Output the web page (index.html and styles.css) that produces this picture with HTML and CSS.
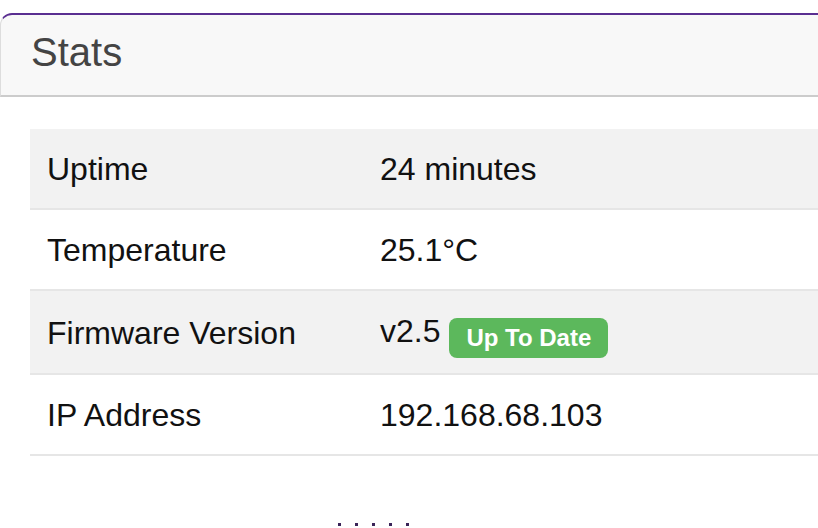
FILE: index.html
```html
<!DOCTYPE html>
<html>
<head>
    <meta charset="UTF-8">
    <title>Stats</title>
    <link rel="stylesheet" href="styles.css">
</head>
<body>
    <div class="panel">
        <div class="panel-heading">Stats</div>
        <div class="panel-body">
            <table class="stats-table">
                <tbody>
                    <tr>
                        <td class="stat-name">Uptime</td>
                        <td>24 minutes</td>
                    </tr>
                    <tr>
                        <td class="stat-name">Temperature</td>
                        <td>25.1°C</td>
                    </tr>
                    <tr>
                        <td class="stat-name">Firmware Version</td>
                        <td>v2.5 <span class="label-success">Up To Date</span></td>
                    </tr>
                    <tr>
                        <td class="stat-name">IP Address</td>
                        <td>192.168.68.103</td>
                    </tr>
                </tbody>
            </table>
        </div>
    </div>

    <div class="dots">
        <span></span><span></span><span></span><span></span><span></span>
    </div>
</body>
</html>
```

FILE: styles.css
```css
* {
    margin: 0;
    padding: 0;
    box-sizing: border-box;
}

body {
    font-family: "Liberation Sans", Arial, sans-serif;
    background: #fff;
    overflow: hidden;
    width: 1100px;
}

.panel {
    margin-top: 13px;
    width: 1000px;
    background: #fff;
}

.panel-heading {
    background: #f8f8f8;
    border-top: 2px solid #5a2e91;
    border-left: 1px solid #ddd;
    border-bottom: 2px solid #ccc;
    border-radius: 12px 12px 0 0;
    color: #444;
    font-size: 40px;
    line-height: 48px;
    padding: 13px 30px 19px;
}

.panel-body {
    padding: 32px 0 30px 30px;
}

.stats-table {
    width: 100%;
    border-collapse: collapse;
    font-size: 32px;
    color: #111;
}

.stats-table td {
    padding: 20px 17px 19px;
    line-height: 40px;
    border-bottom: 2px solid #e6e6e6;
    white-space: nowrap;
}

.stats-table tr:nth-child(odd) td {
    background: #f2f2f2;
}

.stat-name {
    width: 333px;
}

.label-success {
    display: inline-block;
    background: #5cb85c;
    color: #fff;
    font-size: 24px;
    font-weight: bold;
    line-height: 28px;
    padding: 6px 17px;
    margin: -4px 0;
    border-radius: 8px;
    vertical-align: -4px;
}

.dots {
    display: flex;
    gap: 14px;
    margin: 37px 0 0 338px;
}

.dots span {
    width: 3px;
    height: 3px;
    background: #3a2458;
}
```
